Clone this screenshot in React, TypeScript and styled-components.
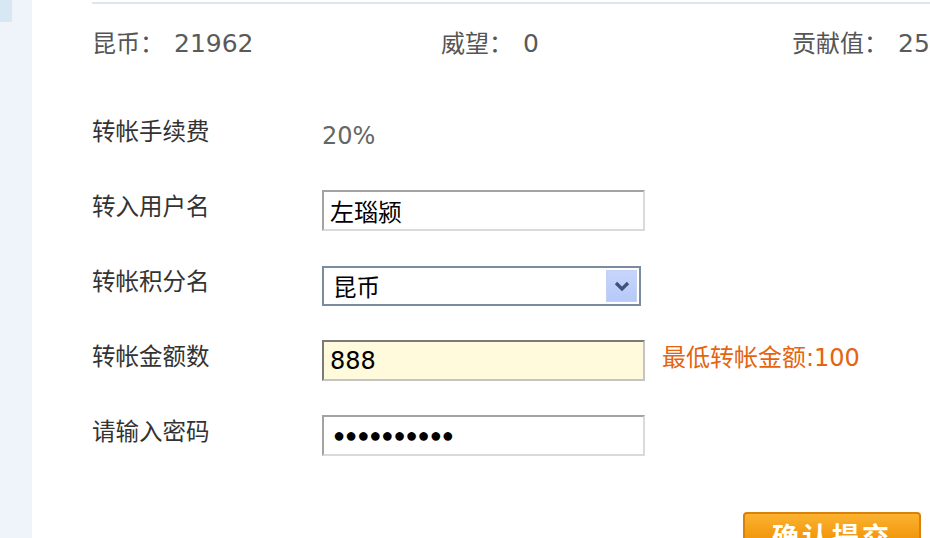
import React from 'react';
import styled, { createGlobalStyle } from 'styled-components';

const GlobalStyle = createGlobalStyle`
    html, body {
        margin: 0;
        padding: 0;
        background: #fff;
        overflow: hidden;
    }
    body {
        font-family: "DejaVu Sans", "Noto Sans CJK SC", sans-serif;
    }
`;

const Page = styled.div`
    display: flex;
    width: 930px;
    height: 538px;
    overflow: hidden;
`;

const Sidebar = styled.div`
    width: 32px;
    flex-shrink: 0;
    background: #eef4f9;
`;

const SideTab = styled.div`
    width: 12px;
    height: 22px;
    background: #d7e7f3;
`;

const Main = styled.div`
    flex: 1;
    min-width: 0;
    padding-left: 60px;
    padding-top: 2px;
`;

const TopRule = styled.div`
    height: 2px;
    background: #dbe7ee;
`;

const Stats = styled.div`
    display: grid;
    grid-template-columns: 349px 351px 351px;
    padding-top: 23px;
    height: 101px;
    box-sizing: border-box;
    white-space: nowrap;
`;

const Stat = styled.div`
    font-family: "Noto Sans CJK SC", sans-serif;
    font-size: 24px;
    line-height: 30px;
    color: #555;
`;

const StatNum = styled.span`
    font-family: "DejaVu Sans", sans-serif;
    font-size: 25px;
    margin-left: 10px;
    color: #5a5a5a;
`;

const Form = styled.div`
    display: flex;
    flex-direction: column;
`;

const Row = styled.div`
    display: grid;
    grid-template-columns: 230px auto 1fr;
    align-items: start;
    height: 75px;
`;

const Label = styled.div`
    padding-top: 10px;
    font-size: 23.5px;
    line-height: 30px;
    color: #333;
    font-family: "Noto Sans CJK SC", sans-serif;
`;

const Value = styled.div`
    padding-top: 16px;
    font-size: 24px;
    line-height: 30px;
    color: #666;
`;

const TextBox = styled.input<{ $tint?: boolean; $dots?: boolean }>`
    margin-top: 10px;
    width: 323px;
    height: 41px;
    box-sizing: border-box;
    padding: 0 0 0 ${p => (p.$dots ? '9px' : '6px')};
    font-family: ${p => (p.$dots ? '"Liberation Sans", sans-serif' : '"DejaVu Sans", "Noto Sans CJK SC", sans-serif')};
    font-size: ${p => (p.$dots ? '20px' : '24px')};
    color: #000;
    background: ${p => (p.$tint ? '#fffadb' : '#fff')};
    border-style: solid;
    border-width: 2px;
    border-color: ${p => (p.$tint ? '#7a7a7a #c4c4c4 #c4c4c4 #7a7a7a' : '#a3a3a3 #dadada #dadada #a3a3a3')};
    outline: none;
`;

const SelectBox = styled.div`
    margin-top: 11px;
    width: 319px;
    height: 40px;
    box-sizing: border-box;
    border: 2px solid #7b8c9f;
    display: flex;
    align-items: center;
    justify-content: space-between;
    padding: 0 2px 0 9px;
    background: #fff;
`;

const SelectText = styled.span`
    font-family: "Noto Sans CJK SC", sans-serif;
    font-size: 23.5px;
    color: #000;
`;

const ArrowBtn = styled.div`
    width: 31px;
    height: 32px;
    box-sizing: border-box;
    border: 1px solid #c3d1f4;
    background: linear-gradient(#c6d5fc, #b6c9f8);
    display: flex;
    align-items: center;
    justify-content: center;
`;

const Hint = styled.div`
    padding-top: 13px;
    padding-left: 17px;
    font-size: 24px;
    line-height: 30px;
    color: #e4640f;
    white-space: nowrap;
`;

const Actions = styled.div`
    display: flex;
    justify-content: flex-end;
    padding-top: 32px;
    padding-right: 9px;
`;

const SubmitButton = styled.button`
    width: 178px;
    height: 46px;
    box-sizing: border-box;
    border: 2px solid #d98108;
    border-radius: 4px;
    background: linear-gradient(#fbb330, #f39a12 50%, #ef8c03);
    color: #fff;
    font-family: "Noto Sans CJK SC", sans-serif;
    font-size: 27px;
    font-weight: bold;
    letter-spacing: 3px;
    padding: 0;
    cursor: pointer;
`;

const Chevron: React.FC = () => (
    <svg width="16" height="12" viewBox="0 0 16 12">
        <path d="M2 3 L8 9 L14 3" fill="none" stroke="#3d5276" strokeWidth="3.2" />
    </svg>
);

const App: React.FC = () => {
    return (
        <>
            <GlobalStyle />
            <Page>
                <Sidebar>
                    <SideTab />
                </Sidebar>
                <Main>
                    <TopRule />
                    <Stats>
                        <Stat>昆币：<StatNum>21962</StatNum></Stat>
                        <Stat>威望：<StatNum>0</StatNum></Stat>
                        <Stat>贡献值：<StatNum>2580</StatNum></Stat>
                    </Stats>
                    <Form>
                        <Row>
                            <Label>转帐手续费</Label>
                            <Value>20%</Value>
                        </Row>
                        <Row>
                            <Label>转入用户名</Label>
                            <TextBox defaultValue="左瑙颍" />
                        </Row>
                        <Row>
                            <Label>转帐积分名</Label>
                            <SelectBox>
                                <SelectText>昆币</SelectText>
                                <ArrowBtn>
                                    <Chevron />
                                </ArrowBtn>
                            </SelectBox>
                        </Row>
                        <Row>
                            <Label>转帐金额数</Label>
                            <TextBox $tint defaultValue="888" />
                            <Hint>最低转帐金额:100</Hint>
                        </Row>
                        <Row>
                            <Label>请输入密码</Label>
                            <TextBox $dots readOnly value="●●●●●●●●●●" />
                        </Row>
                    </Form>
                    <Actions>
                        <SubmitButton>确认提交</SubmitButton>
                    </Actions>
                </Main>
            </Page>
        </>
    );
};

export default App;
